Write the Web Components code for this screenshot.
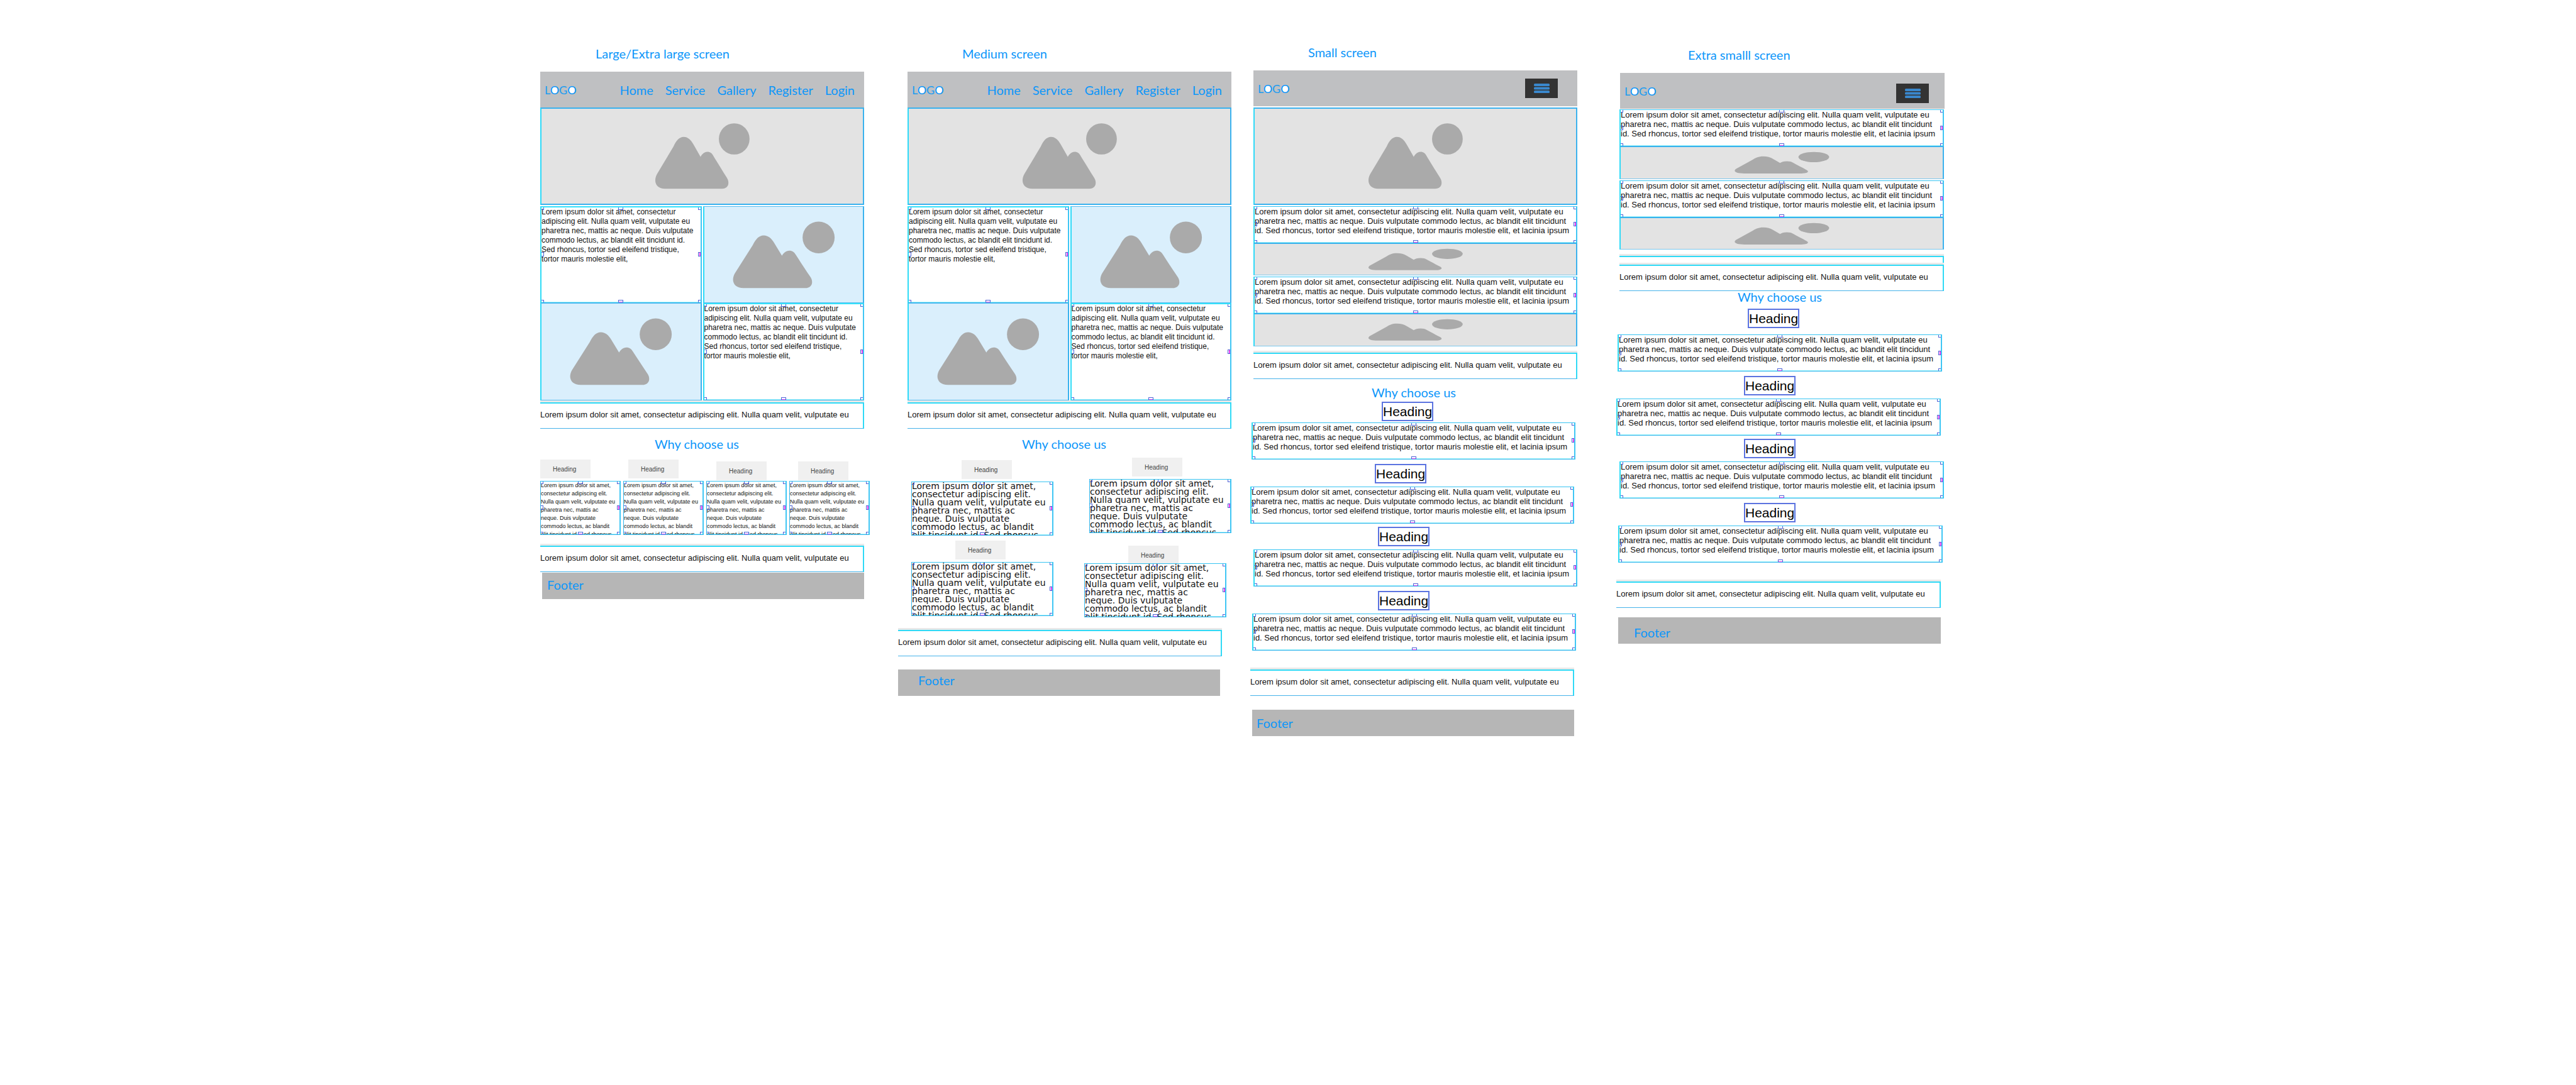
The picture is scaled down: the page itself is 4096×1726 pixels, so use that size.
<!DOCTYPE html>
<html lang="en">
<head>
<meta charset="utf-8">
<title>Responsive wireframes</title>
<style>
  body { margin: 0; background: #fff; font-family: "Liberation Sans", Arial, sans-serif; color: #111; }
</style>
</head>
<body>
<wf-canvas></wf-canvas>

<script>
const define = (name, css, html, setup) => {
  const tpl = document.createElement('template');
  tpl.innerHTML = `<style>${css}</style>${html}`;
  customElements.define(name, class extends HTMLElement {
    constructor() {
      super();
      this.attachShadow({ mode: 'open' }).append(tpl.content.cloneNode(true));
    }
    connectedCallback() { if (setup) setup(this, this.shadowRoot); }
  });
};

/* Titles in the blue humanist face */
define('wf-title', `
  :host { display: block; font: 20px/24px Lato, "Open Sans", sans-serif; color: #0c96fa; white-space: nowrap; }
  h2 { margin: 0; font: inherit; }
`, `<h2><slot></slot></h2>`);

/* Grey site header: logo on the left, links or a burger on the right */
define('wf-navbar', `
  :host { display: flex; box-sizing: border-box; height: 57px; padding: 0 15px 0 7px; align-items: center;
    justify-content: space-between; background: #bfc0c2; font: 20px/24px Lato, "Open Sans", sans-serif; color: #0c96fa; }
  .logo { font-size: 18px; color: #1c9cf0; text-decoration: none; }
  .logo span { background: radial-gradient(ellipse 5px 6px at 50% 51%, #fff 88%, transparent); color: #0c96fa; }
  nav { display: flex; gap: 19px; }
`, `<a class="logo" href="#">L<span>O</span>G<span>O</span></a><nav><slot></slot></nav>`);

define('wf-link', `
  :host { display: block; }
  a { color: inherit; text-decoration: none; }
`, `<a href="#"><slot></slot></a>`);

define('wf-burger', `
  :host { display: block; }
  button { display: flex; width: 52px; height: 31px; padding: 0; border: 0; align-items: center; justify-content: center; background: #333; }
  svg { width: 25px; height: 15px; fill: #3a88cd; }
`, `<button aria-label="Menu"><svg viewBox="0 0 25 15"><rect width="25" height="4" rx="1.5"/><rect y="5.5" width="25" height="4" rx="1.5"/><rect y="11" width="25" height="4" rx="1.5"/></svg></button>`);

/* Image placeholder, drawn stretched to its box */
const MOUNTAIN = 'M310.8 95.7C313.5 90.5 318 85.7 324 85.7C330 85.7 333 88.5 336 94C345 109 353 122 361.5 136C368.5 146 366 159 352.7 159H241.5C224 159 218 145 225.7 130L258 75C263 64 269 56 277.9 56C286 56 292 62 297 71Z';
define('wf-picture', `
  :host { display: block; box-sizing: border-box; aspect-ratio: 10 / 3; background: #e3e3e3;
    border: 2px solid #3ab2ee; border-left-color: #2fdaf8; }
  :host([kind="strip"]) { aspect-ratio: 10 / 1; border-bottom: 1px solid #7cc8ee; border-top-width: 1px; }
  :host([kind="tile"]) { aspect-ratio: 255 / 154; background: #daeffc; border-top: 1px solid #58bdf0; border-bottom: 1px solid #58bdf0; }
  svg { display: block; width: 100%; height: 100%; fill: #aaa; }
`, `<svg preserveAspectRatio="none"><path d="${MOUNTAIN}"/><ellipse cy="60" ry="31"/></svg>`,
(el, root) => {
  const tile = el.getAttribute('kind') === 'tile';
  root.querySelector('svg').setAttribute('viewBox', tile ? '0 0 311 188' : '0 0 628 188');
  const sun = root.querySelector('ellipse');
  sun.setAttribute('cx', tile ? 223.7 : 376.6);
  sun.setAttribute('rx', tile ? 31.4 : 30);
  if (tile) root.querySelector('path').setAttribute('transform', 'translate(-184.7 0) scale(1.083 1)');
});

/* Selected text frame with its resize handles */
define('wf-frame', `
  :host { display: block; position: relative; box-sizing: border-box; padding-bottom: 12px; overflow: hidden; white-space: nowrap;
    border: 1px solid #34b4ec; border-left: 2px solid #2fdcf6; border-right: 2px solid #3fc6f4; border-top-color: #37c4f2;
    box-shadow: inset 0 -1px #9df3fb; font-size: 13px; line-height: 15px; }
  :host([kind="tile"]) { border-top: 2px solid #35e0fa; font-size: 12px; }
  :host([kind="card"]) { height: 86px; padding: 0; font-size: 9px; line-height: 13px; border-left: 1px solid #34b4ec; }
  :host([kind="wide"]) { height: 86px; padding: 0; font-family: "DejaVu Sans", sans-serif; font-size: 14px; line-height: 13px; border-left: 1px solid #34b4ec; }
  p { margin: 0; }
  i { position: absolute; box-sizing: border-box; width: 8px; height: 6px; border: 1px solid #4f62d6; }
  .l { left: -4px; } .r { right: -4px; } .c { left: calc(50% - 4px); }
  .t { top: -2px; } .b { bottom: -2px; } .m { top: calc(50% - 4px); height: 7px; }
  .b.c { background: linear-gradient(#fff 40%, #f03cf0 40%); border-bottom: 0; }
  .r.m { background: linear-gradient(90deg, #fff 30%, #f03cf0 30%); right: -2px; width: 6px; }
`, `<p><slot></slot></p><i class="t l"></i><i class="t c"></i><i class="t r"></i><i class="m l"></i><i class="m r"></i><i class="b l"></i><i class="b c"></i><i class="b r"></i>`);

/* One-line band */
define('wf-band', `
  :host { display: block; box-sizing: border-box; height: 45px; border-top: 3px solid #e9e9e9; font-size: 13px; line-height: 15px; white-space: nowrap; }
  :host([cut]) { height: 14px; }
  div { box-sizing: border-box; height: 100%; padding-top: 10px; border: solid #2fdaf6; border-width: 2px 2px 1px 0; border-bottom-color: #45b2ea; }
  :host([cut]) div { border-bottom: 0; }
`, `<div><slot></slot></div>`);

define('wf-tag', `
  :host { display: block; box-sizing: border-box; width: 80px; height: 30px; padding: 10px 0 0 20px; background: #f0f0f0; color: #444; }
  h3 { margin: 0; font: 10px/12px "Liberation Sans", Arial, sans-serif; }
`, `<h3>Heading</h3>`);

define('wf-heading', `
  :host { display: block; box-sizing: border-box; width: max-content; border: 2px solid #5b73e0; color: #000; }
  h3 { margin: 0; font: 21px/27px "Liberation Sans", Arial, sans-serif; }
`, `<h3>Heading</h3>`);

define('wf-footer', `
  :host { display: block; box-sizing: border-box; height: 42px; background: #b6b6b6; font: 20px/24px Lato, "Open Sans", sans-serif; color: #0c96fa; }
`, `<slot></slot>`);

/* A column of parts; --cut is what the parts leave free at the side */
define('wf-board', `
  :host { display: block; min-width: 0; }
  ::slotted(*) { margin-top: var(--t, 0px); margin-left: var(--x, 0px); }
  ::slotted(wf-navbar), ::slotted(wf-picture), ::slotted(wf-frame), ::slotted(wf-band), ::slotted(.pair) { width: calc(100% - var(--cut)); }
  ::slotted(wf-footer) { width: calc(100% - var(--cut) - 3px); }
`, `<slot></slot>`);

const ONE = 'Lorem ipsum dolor sit amet, consectetur adipiscing elit. Nulla quam velit, vulputate eu';
const THREE = ONE + '<br>pharetra nec, mattis ac neque. Duis vulputate commodo lectus, ac blandit elit tincidunt<br>id. Sed rhoncus, tortor sed eleifend tristique, tortor mauris molestie elit, et lacinia ipsum';
const TILE = 'Lorem ipsum dolor sit amet, consectetur<br>adipiscing elit. Nulla quam velit, vulputate eu<br>pharetra nec, mattis ac neque. Duis vulputate<br>commodo lectus, ac blandit elit tincidunt id.<br>Sed rhoncus, tortor sed eleifend tristique,<br>tortor mauris molestie elit,';
const CARD = 'Lorem ipsum dolor sit amet,<br>consectetur adipiscing elit.<br>Nulla quam velit, vulputate eu<br>pharetra nec, mattis ac<br>neque. Duis vulputate<br>commodo lectus, ac blandit<br>elit tincidunt id. Sed rhoncus';

const links = ['Home', 'Service', 'Gallery', 'Register', 'Login'].map(t => `<wf-link>${t}</wf-link>`).join('');
const desktop = x => `
  <wf-navbar style="--t:17px;--x:${x}px">${links}</wf-navbar>
  <wf-picture style="--x:${x}px"></wf-picture>
  <div class="pair" style="--t:2px;--x:${x}px">
    <wf-frame kind="tile">${TILE}</wf-frame><wf-picture kind="tile"></wf-picture>
    <wf-picture kind="tile"></wf-picture><wf-frame kind="tile">${TILE}</wf-frame>
  </div>
  <wf-band style="--x:${x}px">${ONE}</wf-band>`;
const feature = (x, above, gap, frameX) => `
  <wf-heading style="--t:${above}px;--x:${x}px"></wf-heading>
  <wf-frame style="--t:${gap}px;--x:${frameX}px">${THREE}</wf-frame>`;

define('wf-canvas', `
  :host { display: grid; grid-template-columns: 859fr 524fr 45fr 530fr 30fr 520fr 62fr 521fr 1005fr; align-items: start; }
  .l { grid-column: 2; padding-top: 73px; --cut: 9px; }
  .m { grid-column: 4; padding-top: 73px; --cut: 15px; }
  .s { grid-column: 6; padding-top: 71px; --cut: 5px; }
  .xs { grid-column: 8; padding-top: 75px; --cut: 5px; }
  .pair { display: grid; grid-template-columns: 1fr 1fr; gap: 0 2px; }
  .four { display: grid; grid-template-columns: repeat(4, 1fr); gap: 4px; height: 120px; }
  .four > div { display: flex; flex-direction: column; justify-content: space-between; }
  .two { display: grid; grid-template-columns: 226fr 226fr; column-gap: 57px; padding-left: 21px; }
  .two > div { display: flex; flex-direction: column; }
  .two wf-frame { margin-top: 4px; }
  .low { margin-top: 3px; }
  .s wf-burger { margin-right: 16px; }
  .xs wf-burger { margin: 8px 10px 0 0; }
`, `
<wf-board class="l">
  <wf-title style="--x:88px">Large/Extra large screen</wf-title>
  ${desktop(0)}
  <wf-title style="--t:12px;--x:182px">Why choose us</wf-title>
  <div class="four" style="--t:13px">
    <div><wf-tag></wf-tag><wf-frame kind="card">${CARD}</wf-frame></div>
    <div><wf-tag style="margin-left:8px"></wf-tag><wf-frame kind="card">${CARD}</wf-frame></div>
    <div><wf-tag class="low" style="margin-left:16px"></wf-tag><wf-frame kind="card">${CARD}</wf-frame></div>
    <div><wf-tag class="low" style="margin-left:14px"></wf-tag><wf-frame kind="card">${CARD}</wf-frame></div>
  </div>
  <wf-band style="--t:14px">${ONE}</wf-band>
  <wf-footer style="--t:1px;--x:3px;padding:7px 8px">Footer</wf-footer>
</wf-board>

<wf-board class="m">
  <wf-title style="--x:102px">Medium screen</wf-title>
  ${desktop(15)}
  <wf-title style="--t:12px;--x:197px">Why choose us</wf-title>
  <div class="two" style="--t:10px">
    <div style="padding-top:4px">
      <wf-tag style="margin-left:80px"></wf-tag><wf-frame kind="wide">${CARD}</wf-frame>
      <wf-tag style="margin:8px 0 0 70px"></wf-tag><wf-frame kind="wide">${CARD}</wf-frame>
    </div>
    <div>
      <wf-tag style="margin-left:68px"></wf-tag><wf-frame kind="wide">${CARD}</wf-frame>
      <wf-tag style="margin:20px 0 0 62px"></wf-tag><wf-frame kind="wide" style="margin:-2px 8px 0 -8px">${CARD}</wf-frame>
    </div>
  </div>
  <wf-band style="--t:17px">${ONE}</wf-band>
  <wf-footer style="--t:21px;padding:5px 32px">Footer</wf-footer>
</wf-board>

<wf-board class="s">
  <wf-title style="--x:92px">Small screen</wf-title>
  <wf-navbar style="--t:17px;--x:5px"><wf-burger></wf-burger></wf-navbar>
  <wf-picture style="--t:2px;--x:5px"></wf-picture>
  <wf-frame style="--t:2px;--x:5px">${THREE}</wf-frame>
  <wf-picture kind="strip" style="--x:5px"></wf-picture>
  <wf-frame style="--t:2px;--x:5px">${THREE}</wf-frame>
  <wf-picture kind="strip" style="--x:5px"></wf-picture>
  <wf-band style="--t:7px;--x:5px">${ONE}</wf-band>
  <wf-title style="--t:9px;--x:193px">Why choose us</wf-title>
  ${feature(209, 3, 2, 2)}${feature(198, 7, 5, 0)}${feature(203, 5, 5, 5)}${feature(203, 7, 5, 3)}
  <wf-band style="--t:27px">${ONE}</wf-band>
  <wf-footer style="--t:22px;--x:3px;padding:9px 7px">Footer</wf-footer>
</wf-board>

<wf-board class="xs">
  <wf-title style="--x:114px">Extra smalll screen</wf-title>
  <wf-navbar style="--t:17px;--x:6px"><wf-burger></wf-burger></wf-navbar>
  <wf-frame style="--t:1px;--x:5px">${THREE}</wf-frame>
  <wf-picture kind="strip" style="--x:5px"></wf-picture>
  <wf-frame style="--t:2px;--x:5px">${THREE}</wf-frame>
  <wf-picture kind="strip" style="--x:5px"></wf-picture>
  <wf-band cut style="--t:7px;--x:5px"></wf-band>
  <wf-band style="--x:5px">${ONE}</wf-band>
  <wf-title style="--t:-3px;--x:193px">Why choose us</wf-title>
  ${feature(209, 7, 10, 2)}${feature(203, 7, 5, 0)}${feature(203, 5, 5, 5)}${feature(203, 7, 5, 3)}
  <wf-band style="--t:27px">${ONE}</wf-band>
  <wf-footer style="--t:15px;--x:3px;padding:12px 25px">Footer</wf-footer>
</wf-board>
`);
</script>
</body>
</html>
